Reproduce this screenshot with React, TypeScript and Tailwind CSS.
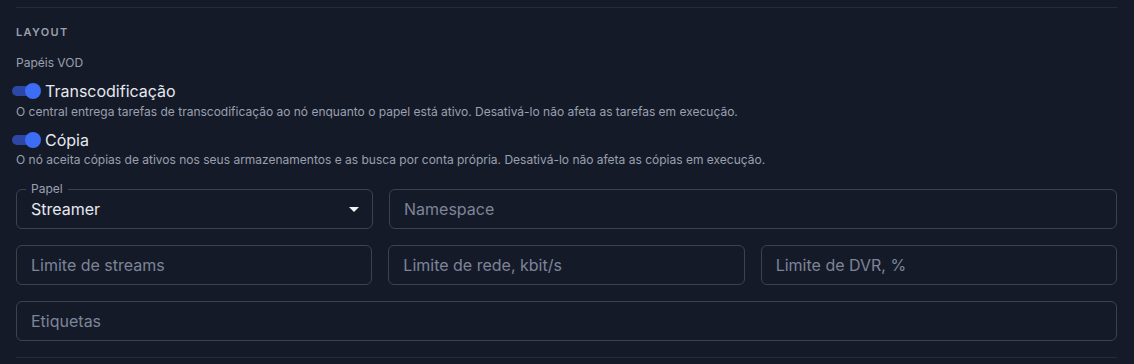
import React from "react";

function Toggle({ label }: { label: string }) {
  return (
    <div className="flex h-6 items-center -ml-1">
      <div className="relative h-4 w-[29px] shrink-0">
        <div className="absolute left-0 top-[3px] h-2.5 w-6 rounded-full bg-[#2c47a6]" />
        <div className="absolute right-0 top-0 h-4 w-4 rounded-full bg-[#3d6df5]" />
      </div>
      <span className="ml-1 text-base leading-6 text-[#e6e8ee]">{label}</span>
    </div>
  );
}

function Field({ placeholder, className = "" }: { placeholder: string; className?: string }) {
  return (
    <div className={`flex h-10 items-center rounded-md border border-[#3d4252] px-[14px] ${className}`}>
      <span className="text-base text-[#7d8598]">{placeholder}</span>
    </div>
  );
}

export default function App() {
  return (
    <div
      className="min-h-[364px] w-full bg-[#151a29] pl-4 pr-[17px] pt-[7px]"
      style={{ fontFamily: "Inter, 'Noto Sans', sans-serif" }}
    >
      <div className="border-t border-[#262b3b]" />
      <div className="mt-4 text-[11px] font-semibold leading-4 tracking-[0.12em] text-[#9aa0ae]">LAYOUT</div>
      <div className="mt-[15px] text-xs leading-4 text-[#9aa0ae]">Papéis VOD</div>
      <div className="mt-2">
        <Toggle label="Transcodificação" />
        <div className="mt-[1px] text-xs leading-4 text-[#9aa0ae]">
          O central entrega tarefas de transcodificação ao nó enquanto o papel está ativo. Desativá-lo não afeta as tarefas em execução.
        </div>
      </div>
      <div className="mt-2">
        <Toggle label="Cópia" />
        <div className="text-xs leading-4 text-[#9aa0ae]">
          O nó aceita cópias de ativos nos seus armazenamentos e as busca por conta própria. Desativá-lo não afeta as cópias em execução.
        </div>
      </div>

      <div className="mt-[21px] flex flex-col gap-4">
        <div className="grid grid-cols-[357px_1fr] gap-4">
          <div className="relative flex h-10 items-center justify-between rounded-md border border-[#3d4252] pl-[14px] pr-[13px]">
            <span className="absolute -top-[9px] left-[9px] bg-[#151a29] px-[5px] text-xs leading-4 text-[#9aa0ae]">Papel</span>
            <span className="text-base text-[#e6e8ee]">Streamer</span>
            <svg width="10" height="6" viewBox="0 0 10 6" className="mt-[1px]">
              <path d="M0 0 L10 0 L5 5 Z" fill="#f2f3f5" />
            </svg>
          </div>
          <Field placeholder="Namespace" />
        </div>
        <div className="grid grid-cols-3 gap-4">
          <Field placeholder="Limite de streams" />
          <Field placeholder="Limite de rede, kbit/s" />
          <Field placeholder="Limite de DVR, %" />
        </div>
        <Field placeholder="Etiquetas" />
      </div>
      <div className="mt-4 border-t border-[#262b3b]" />
    </div>
  );
}
